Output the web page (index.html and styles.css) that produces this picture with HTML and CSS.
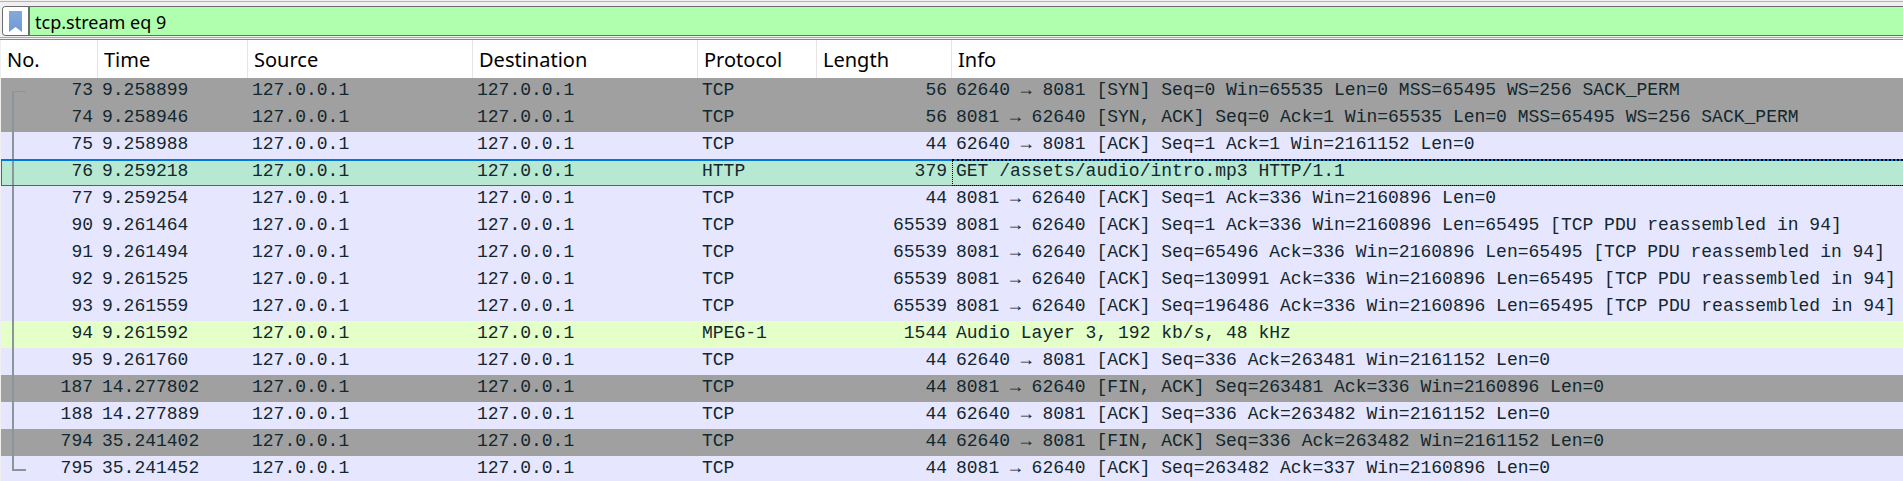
FILE: index.html
```html
<!DOCTYPE html>
<html lang="en">
<head>
<meta charset="utf-8">
<title>Packet capture</title>
<link rel="stylesheet" href="styles.css">
</head>
<body>
<form class="toolbar">
  <div class="filter">
    <button class="bookmark" type="button" aria-label="Bookmarks">
      <svg width="13" height="21" viewBox="0 0 13 21" aria-hidden="true"><defs><linearGradient id="b" x1="0" y1="0" x2="0" y2="1"><stop offset="0" stop-color="#86a9dc"/><stop offset="1" stop-color="#6b9bd2"/></linearGradient></defs><path d="M0 0H13V21L6.500 16L0 21Z" fill="url(#b)"/></svg>
    </button>
    <input class="expression" type="text" value="tcp.stream eq 9" aria-label="Display filter" spellcheck="false">
  </div>
</form>
<main class="packets">
<table class="list">
  <colgroup><col class="c-no"><col class="c-time"><col class="c-addr"><col class="c-addr"><col class="c-proto"><col class="c-len"><col></colgroup>
  <thead><tr><th>No.</th><th>Time</th><th>Source</th><th>Destination</th><th>Protocol</th><th>Length</th><th>Info</th></tr></thead>
  <tbody>
    <tr class="gray first"><td>73</td><td>9.258899</td><td>127.0.0.1</td><td>127.0.0.1</td><td>TCP</td><td>56</td><td>62640 → 8081 [SYN] Seq=0 Win=65535 Len=0 MSS=65495 WS=256 SACK_PERM</td></tr>
    <tr class="gray"><td>74</td><td>9.258946</td><td>127.0.0.1</td><td>127.0.0.1</td><td>TCP</td><td>56</td><td>8081 → 62640 [SYN, ACK] Seq=0 Ack=1 Win=65535 Len=0 MSS=65495 WS=256 SACK_PERM</td></tr>
    <tr><td>75</td><td>9.258988</td><td>127.0.0.1</td><td>127.0.0.1</td><td>TCP</td><td>44</td><td>62640 → 8081 [ACK] Seq=1 Ack=1 Win=2161152 Len=0</td></tr>
    <tr class="selected"><td>76</td><td>9.259218</td><td>127.0.0.1</td><td>127.0.0.1</td><td>HTTP</td><td>379</td><td>GET /assets/audio/intro.mp3 HTTP/1.1</td></tr>
    <tr><td>77</td><td>9.259254</td><td>127.0.0.1</td><td>127.0.0.1</td><td>TCP</td><td>44</td><td>8081 → 62640 [ACK] Seq=1 Ack=336 Win=2160896 Len=0</td></tr>
    <tr><td>90</td><td>9.261464</td><td>127.0.0.1</td><td>127.0.0.1</td><td>TCP</td><td>65539</td><td>8081 → 62640 [ACK] Seq=1 Ack=336 Win=2160896 Len=65495 [TCP PDU reassembled in 94]</td></tr>
    <tr><td>91</td><td>9.261494</td><td>127.0.0.1</td><td>127.0.0.1</td><td>TCP</td><td>65539</td><td>8081 → 62640 [ACK] Seq=65496 Ack=336 Win=2160896 Len=65495 [TCP PDU reassembled in 94]</td></tr>
    <tr><td>92</td><td>9.261525</td><td>127.0.0.1</td><td>127.0.0.1</td><td>TCP</td><td>65539</td><td>8081 → 62640 [ACK] Seq=130991 Ack=336 Win=2160896 Len=65495 [TCP PDU reassembled in 94]</td></tr>
    <tr><td>93</td><td>9.261559</td><td>127.0.0.1</td><td>127.0.0.1</td><td>TCP</td><td>65539</td><td>8081 → 62640 [ACK] Seq=196486 Ack=336 Win=2160896 Len=65495 [TCP PDU reassembled in 94]</td></tr>
    <tr class="green"><td>94</td><td>9.261592</td><td>127.0.0.1</td><td>127.0.0.1</td><td>MPEG-1</td><td>1544</td><td>Audio Layer 3, 192 kb/s, 48 kHz</td></tr>
    <tr><td>95</td><td>9.261760</td><td>127.0.0.1</td><td>127.0.0.1</td><td>TCP</td><td>44</td><td>62640 → 8081 [ACK] Seq=336 Ack=263481 Win=2161152 Len=0</td></tr>
    <tr class="gray"><td>187</td><td>14.277802</td><td>127.0.0.1</td><td>127.0.0.1</td><td>TCP</td><td>44</td><td>8081 → 62640 [FIN, ACK] Seq=263481 Ack=336 Win=2160896 Len=0</td></tr>
    <tr><td>188</td><td>14.277889</td><td>127.0.0.1</td><td>127.0.0.1</td><td>TCP</td><td>44</td><td>62640 → 8081 [ACK] Seq=336 Ack=263482 Win=2161152 Len=0</td></tr>
    <tr class="gray"><td>794</td><td>35.241402</td><td>127.0.0.1</td><td>127.0.0.1</td><td>TCP</td><td>44</td><td>62640 → 8081 [FIN, ACK] Seq=336 Ack=263482 Win=2161152 Len=0</td></tr>
    <tr class="last"><td>795</td><td>35.241452</td><td>127.0.0.1</td><td>127.0.0.1</td><td>TCP</td><td>44</td><td>8081 → 62640 [ACK] Seq=263482 Ack=337 Win=2160896 Len=0</td></tr>
  </tbody>
</table>
</main>
</body>
</html>
```
FILE: styles.css
```css
* { box-sizing: border-box; }
body {
  margin: 0;
  height: 100vh;
  overflow: hidden;
  background: #f0f0f0;
  color: #000;
  font-family: "Noto Sans", "Open Sans", sans-serif;
  font-size: 20px;
}

/* Filter toolbar */
.toolbar {
  margin: 1px 0 0;
  padding: 4px 0 1px 2px;
  border-top: 1px solid #b4b4b4;
  border-bottom: 1px solid #a8a8a8;
}
.filter {
  display: flex;
  height: 30px;
  border: 1px solid #6c6c6c;
  border-right: 0;
  border-radius: 4px 0 0 4px;
  background: #afffaf;
  overflow: hidden;
}
.bookmark {
  display: flex;
  align-items: center;
  justify-content: center;
  width: 27px;
  padding: 0;
  border: 0;
  border-right: 2px solid #6c6c6c;
  background: #fff;
}
.expression {
  flex: 1;
  min-width: 0;
  padding: 2px 5px 0;
  border: 0;
  outline: 0;
  background: transparent;
  color: #000;
  font: inherit;
  font-size: 18px;
}

/* Packet list */
.packets {
  margin-top: 1px;
  padding-left: 1px;
  border-top: 1px solid #828790;
}
.list {
  width: 100%;
  table-layout: fixed;
  border-collapse: separate;
  border-spacing: 0;
}
.c-no { width: 97px; }
.c-time { width: 150px; }
.c-addr { width: 225px; }
.c-proto { width: 119px; }
.c-len { width: 135px; }
th {
  height: 38px;
  padding: 1px 5px 0 6px;
  border-right: 1px solid #e5e5e5;
  background: #fff;
  font-weight: 400;
  line-height: 24px;
  text-align: left;
}
th:last-child { border-right: 0; }
td {
  position: relative;
  height: 27px;
  padding: 0 5px 3px 4px;
  background: #e7e6ff;
  color: #12272e;
  font-family: "Liberation Mono", monospace;
  font-size: 18px;
  line-height: 24px;
  white-space: nowrap;
}
td:nth-child(1), td:nth-child(6) { text-align: right; }
.gray td { background: #a0a0a0; }
.green td { background: #e4ffc7; }

/* Selected packet */
.selected td {
  padding-bottom: 4px;
  border-top: 2px solid #0078d7;
  border-bottom: 1px solid #0078d7;
  background: #b7e8d2;
  line-height: 20px;
}
.selected td:first-child { border-left: 1px solid #0078d7; }
.selected td:last-child::after {
  content: "";
  position: absolute;
  inset: -2px 0 -1px;
  border: 1px dotted #000;
  border-top-width: 2px;
  border-right: 0;
}

/* Conversation bracket beside the packet numbers */
td:first-child::before {
  content: "";
  position: absolute;
  top: 0;
  bottom: 0;
  left: 11px;
  width: 12px;
  border: 0 solid #8b969b;
  border-left-width: 2px;
}
.selected td:first-child::before { left: 10px; }
.first td:first-child::before { top: 13px; border-top-width: 1px; }
.last td:first-child::before { bottom: 12px; border-bottom-width: 2px; }
```
